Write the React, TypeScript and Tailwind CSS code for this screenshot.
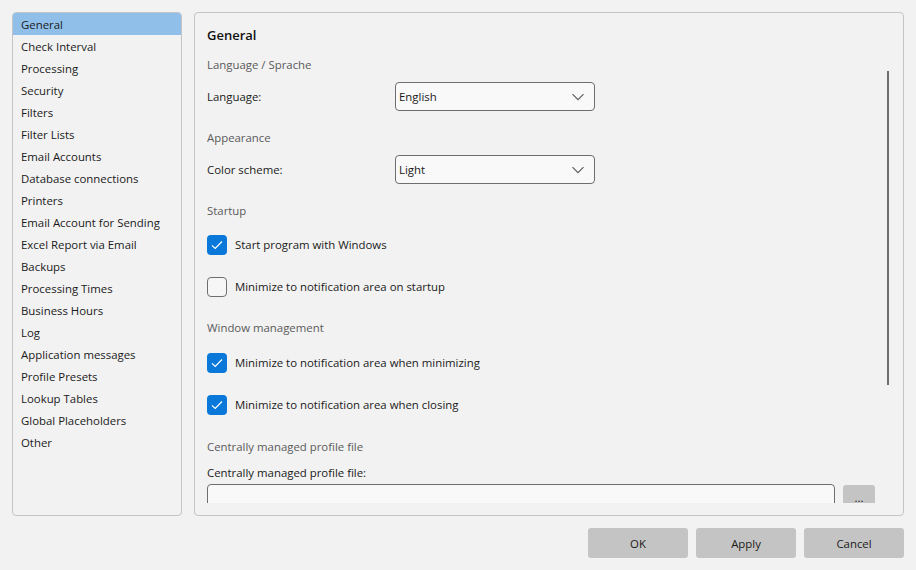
const font = { fontFamily: '"Open Sans", sans-serif' };

const items = ["General","Check Interval","Processing","Security","Filters","Filter Lists","Email Accounts","Database connections","Printers","Email Account for Sending","Excel Report via Email","Backups","Processing Times","Business Hours","Log","Application messages","Profile Presets","Lookup Tables","Global Placeholders","Other"];

function Heading({ children, className }: { children: string; className: string }) {
  return <div className={`h-4 leading-4 text-[#5a5a5a] font-medium ${className}`}>{children}</div>;
}

function Select({ value }: { value: string }) {
  return (
    <div className="w-[200px] h-[29px] ml-[150px] flex items-center justify-between pl-[3px] pr-[9px] bg-[#f9f9f9] border border-[#6e6e6e] rounded-[4px]">
      <span className="text-[#1a1a1a]">{value}</span>
      <svg width="14" height="8" viewBox="0 0 14 8" fill="none" stroke="#5a5a5a" strokeWidth="1.1"><path d="M1.5 1.2 7 6.7l5.5-5.5" /></svg>
    </div>
  );
}

function Row({ label, value, className }: { label: string; value: string; className: string }) {
  return (
    <div className={`flex items-center ${className}`}>
      <span className="w-[38px] whitespace-nowrap text-[#1a1a1a]">{label}</span>
      <Select value={value} />
    </div>
  );
}

function Check({ label, checked, className }: { label: string; checked?: boolean; className: string }) {
  return (
    <div className={`flex items-center h-5 gap-2 ${className}`}>
      {checked ? (
        <span className="w-5 h-5 rounded-[4px] bg-[#0a78d8] flex items-center justify-center">
          <svg width="12" height="10" viewBox="0 0 12 10" fill="none" stroke="#fff" strokeWidth="1.2"><path d="M1 5.3 4.2 8.5 11 1.5" /></svg>
        </span>
      ) : (
        <span className="w-5 h-5 rounded-[4px] bg-[#f6f6f6] border border-[#6e6e6e]" />
      )}
      <span className="text-[#1a1a1a]">{label}</span>
    </div>
  );
}

function Btn({ label }: { label: string }) {
  return <div className="w-[100px] h-[30px] pt-px rounded-[3px] bg-[#c4c4c4] flex items-center justify-center text-[#1a1a1a]">{label}</div>;
}

export default function App() {
  return (
    <div style={font} className="w-[916px] h-[570px] bg-[#f2f2f2] p-3 flex flex-col gap-3 text-[11.4px] overflow-hidden">
      <div className="flex gap-3 h-[504px]">
        <div className="w-[170px] rounded-[4px] border border-[#c4c4c4] overflow-hidden">
          {items.map((t, i) => (
            <div key={t} className={`h-[22px] leading-[23px] pl-2 text-[#1a1a1a] whitespace-nowrap ${i === 0 ? "bg-[#90c0ea]" : ""}`}>{t}</div>
          ))}
        </div>
        <div className="relative flex-1 rounded-[4px] border border-[#c4c4c4] pl-3 pb-3">
          <div className="h-[490px] overflow-hidden">
            <div className="pt-[12px] h-5 leading-5 text-[13px] font-semibold text-[#111] box-content">General</div>
            <Heading className="mt-[12px]">Language / Sprache</Heading>
            <Row label="Language:" value="English" className="mt-[9px]" />
            <Heading className="mt-[19px]">Appearance</Heading>
            <Row label="Color scheme:" value="Light" className="mt-[9px]" />
            <Heading className="mt-[19px]">Startup</Heading>
            <Check checked label="Start program with Windows" className="mt-[16px]" />
            <Check label="Minimize to notification area on startup" className="mt-[22px]" />
            <Heading className="mt-[23px]">Window management</Heading>
            <Check checked label="Minimize to notification area when minimizing" className="mt-[17px]" />
            <Check checked label="Minimize to notification area when closing" className="mt-[22px]" />
            <Heading className="mt-[24px]">Centrally managed profile file</Heading>
            <div className="mt-[10px] h-4 leading-4 text-[#1a1a1a]">Centrally managed profile file:</div>
            <div className="flex gap-2 mt-[3px]">
              <div className="w-[628px] h-[30px] rounded-[4px] bg-[#f9f9f9] border border-[#6e6e6e]" />
              <div className="w-[32px] h-[30px] mt-px rounded-[3px] bg-[#c4c4c4] flex items-start justify-center text-[#1a1a1a]">
                <span className="mt-2 h-[10px] leading-[10px]">...</span>
              </div>
            </div>
          </div>
          <div className="absolute left-[692px] top-[58px] w-[2px] h-[314px] bg-[#6e6e6e]" />
        </div>
      </div>
      <div className="flex justify-end gap-2">
        <Btn label="OK" />
        <Btn label="Apply" />
        <Btn label="Cancel" />
      </div>
    </div>
  );
}
